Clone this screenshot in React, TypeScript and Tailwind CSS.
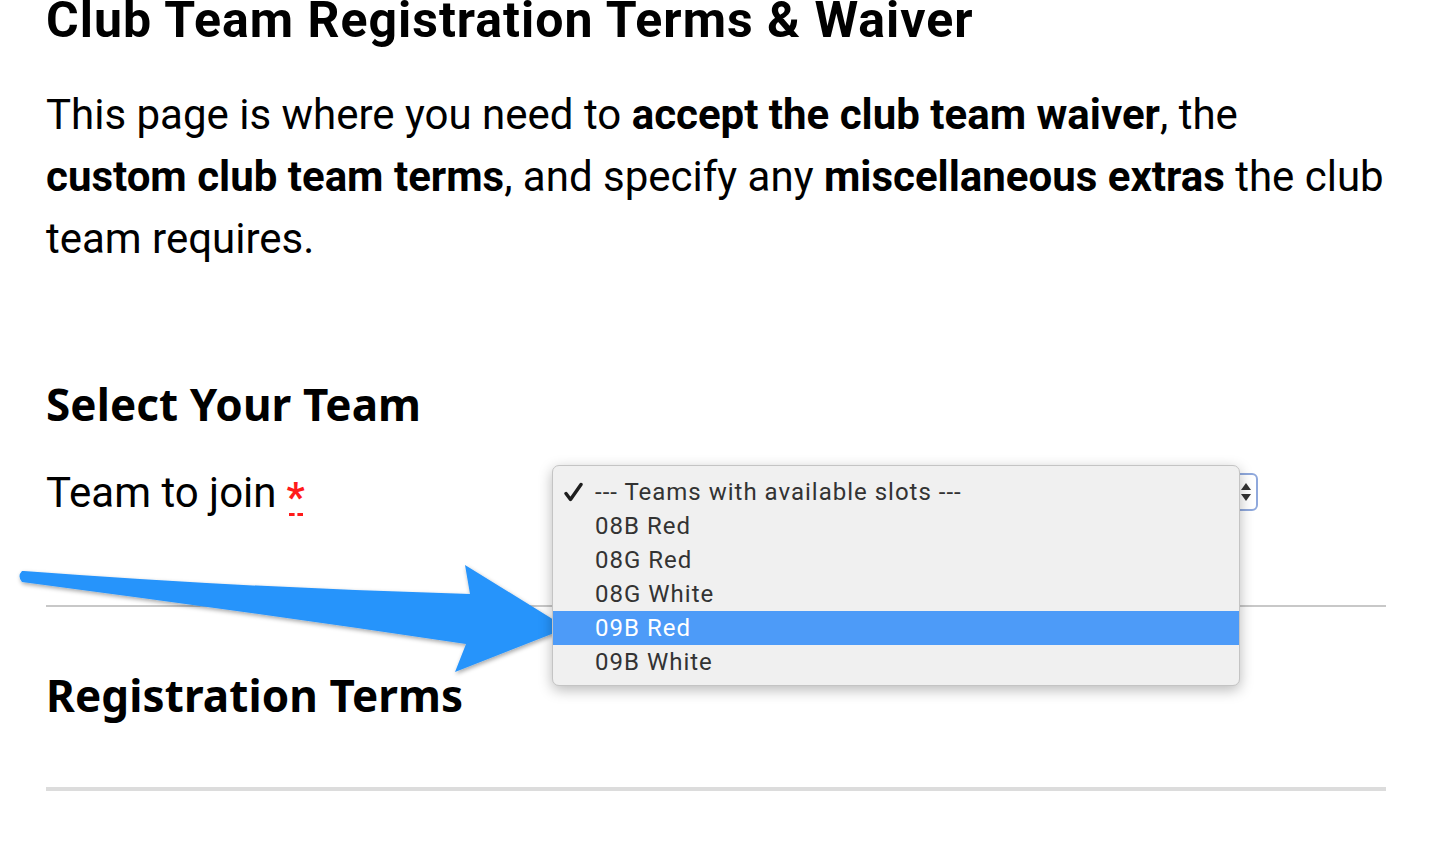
import React from 'react';

const teams = ['08B Red', '08G Red', '08G White', '09B Red', '09B White'];

const Arrow = () => (
  <svg className="absolute left-0 top-0 pointer-events-none" width="600" height="700" viewBox="0 0 600 700">
    <defs>
      <filter id="sh" x="-10%" y="-10%" width="120%" height="130%">
        <feDropShadow dx="1" dy="2" stdDeviation="2" floodColor="#000" floodOpacity="0.35" />
      </filter>
    </defs>
    <path
      d="M22 571 Q17 576 22 582 Q250 612 466 644 L455 672 L567 628 L465 565 L470 594 Q250 588 24 571 Z"
      fill="#2894fb"
      filter="url(#sh)"
    />
  </svg>
);

export default function App() {
  return (
    <div className="relative w-[1442px] h-[854px] bg-white overflow-hidden text-black font-['Roboto']">
      <div className="pl-[46px] w-[1386px]">
        <h1 className="font-bold text-[50px] leading-[54px] -mt-[7px] tracking-[1px] whitespace-nowrap">
          Club Team Registration Terms &amp; Waiver
        </h1>
        <p className="text-[42px] leading-[62px] mt-[37px] whitespace-nowrap">
          This page is where you need to <b>accept the club team waiver</b>, the
          <br />
          <b>custom club team terms</b>, and specify any <b>miscellaneous extras</b> the club
          <br />
          team requires.
        </p>
        <h2 className="font-['Noto_Sans'] font-bold text-[44px] leading-[50px] tracking-[0.1px] mt-[109px]">
          Select Your Team
        </h2>
        <div className="flex items-start mt-[39px] h-[137px]">
          <div className="w-[506px] text-[42px] leading-[50px] flex items-start">
            <span>Team to join</span>
            <abbr className="ml-[10px] mt-[15px] h-[38px] flex flex-col items-center no-underline text-[#ff1a1a] font-bold text-[40px] leading-[30px]">
              <span>*</span>
              <span className="w-[14px] border-b-[3px] border-dashed border-[#ff1a1a]" />
            </abbr>
          </div>
          <div className="ml-[8px] mt-[5px] w-[698px] h-[38px] rounded-[6px] border-2 border-[#8fa8dc] bg-white flex items-center justify-end pr-[4px]">
            <svg width="12" height="24" viewBox="0 0 12 24">
              <path d="M6 3 L11 10 L1 10 Z" fill="#333" />
              <path d="M1 14 L11 14 L6 21 Z" fill="#333" />
            </svg>
          </div>
        </div>
        <hr className="border-0 h-[2px] bg-[#c8c8c8]" />
        <h2 className="font-['Noto_Sans'] font-bold text-[44px] leading-[50px] tracking-[0.1px] mt-[63px]">
          Registration Terms
        </h2>
        <hr className="border-0 h-[4px] bg-[#dcdcdc] mt-[67px]" />
      </div>

      <Arrow />

      <div className="absolute left-[552px] top-[465px] w-[688px] h-[221px] rounded-[7px] bg-[#f0f0f0] border border-[#c4c4c4] shadow-[0_4px_14px_rgba(0,0,0,0.28)] pt-[9px] text-[24px] tracking-[1px] text-[#333]">
        <div className="h-[34px] flex items-center">
          <span className="w-[42px] pl-[11px] flex items-center">
            <svg width="19" height="20" viewBox="0 0 19 20">
              <path d="M2 11.5 L6.5 17.5 L17 2.5" fill="none" stroke="#1e1e1e" strokeWidth="3.4" strokeLinejoin="round" strokeLinecap="round" />
            </svg>
          </span>
          <span>--- Teams with available slots ---</span>
        </div>
        {teams.map((t) => (
          <div
            key={t}
            className={
              t === '09B Red'
                ? 'h-[34px] flex items-center bg-[#4d9bf8] text-white'
                : 'h-[34px] flex items-center'
            }
          >
            <span className="w-[42px]" />
            <span>{t}</span>
          </div>
        ))}
      </div>
    </div>
  );
}
